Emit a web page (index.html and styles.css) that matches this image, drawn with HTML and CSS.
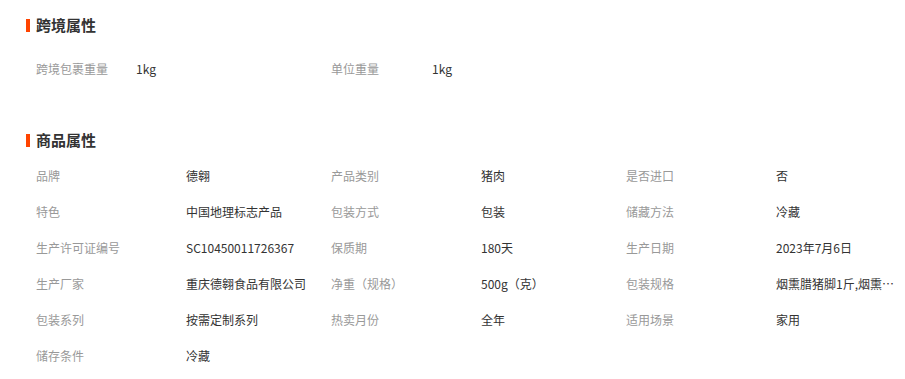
FILE: index.html
```html
<!DOCTYPE html>
<html lang="zh-CN">
<head>
<meta charset="utf-8">
<link rel="stylesheet" href="styles.css">
</head>
<body>
<section class="attr-section section-cross">
  <h3 class="attr-title">跨境属性</h3>
  <div class="attr-grid grid-cross">
    <div class="attr-label">跨境包裹重量</div><div class="attr-value">1kg</div>
    <div class="attr-label">单位重量</div><div class="attr-value">1kg</div>
  </div>
</section>
<section class="attr-section section-goods">
  <h3 class="attr-title">商品属性</h3>
  <div class="attr-grid grid-goods">
    <div class="attr-label">品牌</div><div class="attr-value">德翱</div>
    <div class="attr-label">产品类别</div><div class="attr-value">猪肉</div>
    <div class="attr-label">是否进口</div><div class="attr-value">否</div>
    <div class="attr-label">特色</div><div class="attr-value">中国地理标志产品</div>
    <div class="attr-label">包装方式</div><div class="attr-value">包装</div>
    <div class="attr-label">储藏方法</div><div class="attr-value">冷藏</div>
    <div class="attr-label">生产许可证编号</div><div class="attr-value">SC10450011726367</div>
    <div class="attr-label">保质期</div><div class="attr-value">180天</div>
    <div class="attr-label">生产日期</div><div class="attr-value">2023年7月6日</div>
    <div class="attr-label">生产厂家</div><div class="attr-value">重庆德翱食品有限公司</div>
    <div class="attr-label">净重（规格）</div><div class="attr-value">500g（克）</div>
    <div class="attr-label">包装规格</div><div class="attr-value">烟熏腊猪脚1斤,烟熏腊猪脚2斤</div>
    <div class="attr-label">包装系列</div><div class="attr-value">按需定制系列</div>
    <div class="attr-label">热卖月份</div><div class="attr-value">全年</div>
    <div class="attr-label">适用场景</div><div class="attr-value">家用</div>
    <div class="attr-label">储存条件</div><div class="attr-value">冷藏</div>
  </div>
</section>
</body>
</html>
```

FILE: styles.css
```css
html, body {
  margin: 0;
  padding: 0;
  background: #fff;
}
body {
  font-family: "Noto Sans CJK SC", "Liberation Sans", sans-serif;
  font-size: 12px;
  color: #333;
  width: 905px;
  overflow: hidden;
}
.attr-section {
  display: flex;
  flex-direction: column;
}
.section-cross {
  padding-top: 15px;
}
.section-goods {
  padding-top: 44px;
}
.attr-title {
  margin: 0 0 0 26px;
  display: flex;
  align-items: center;
  gap: 6px;
  height: 20px;
  font-size: 15px;
  font-weight: bold;
  color: #333;
  line-height: 20px;
}
.attr-title::before {
  content: "";
  width: 4px;
  height: 13px;
  background: #ff4400;
}
.section-cross .attr-title {
  margin-bottom: 15px;
}
.section-goods .attr-title {
  margin-bottom: 7px;
}
.attr-grid {
  display: grid;
  padding-left: 36px;
  grid-auto-rows: 36px;
  align-items: center;
}
.grid-cross {
  grid-template-columns: 100px 195px 101px 195px;
}
.grid-goods {
  grid-template-columns: 150px 145px 150px 145px 150px 119px;
}
.attr-label {
  color: #999;
  white-space: nowrap;
}
.attr-value {
  color: #333;
  white-space: nowrap;
  overflow: hidden;
  text-overflow: ellipsis;
}
```
